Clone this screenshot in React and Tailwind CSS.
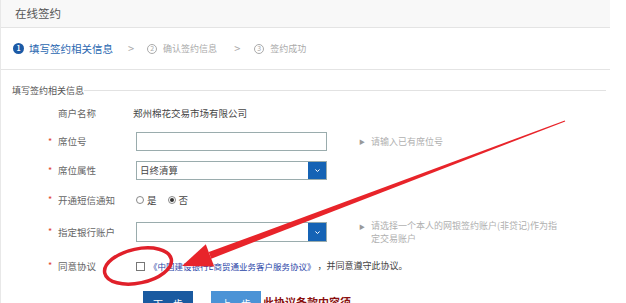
import React from "react";

const font = { fontFamily: '"Noto Sans CJK SC", "Noto Sans", sans-serif' };

function Label({ star, children }) {
  return (
    <div className="flex items-center w-[135px] pl-[47px] text-[9.5px] text-[#666]">
      <span className="w-[10px] text-[#e0452e] text-[9px]">{star ? "*" : ""}</span>
      <span>{children}</span>
    </div>
  );
}

function Chevron() {
  return (
    <svg width="7" height="5" viewBox="0 0 8 6">
      <path d="M1.5 1.8 L4 4.2 L6.5 1.8" fill="none" stroke="white" strokeWidth="1.2" />
    </svg>
  );
}

export default function App() {
  return (
    <div className="relative w-[626px] h-[303px] overflow-hidden bg-white" style={font}>
      <div className="w-[610px] border-l border-[#e8e8e8]">
        <div className="h-[28px] bg-[#f8f8f8] border-b border-[#e4e4e4] flex items-center pl-[14px] text-[11.5px] text-[#555]">
          在线签约
        </div>
        <div className="h-[42px] border-b border-[#e4e4e4] flex items-center pl-[12px] text-[9px] text-[#aaa]">
          <span className="w-[11px] h-[11px] rounded-full bg-[#1c5aa6] text-white text-[7px] flex items-center justify-center font-bold">1</span>
          <span className="ml-[5px] text-[10.5px] text-[#2a67b0]">填写签约相关信息</span>
          <span className="ml-[15px] text-[11px] text-[#aaa]">&gt;</span>
          <span className="ml-[13px] w-[10px] h-[10px] rounded-full border border-[#aaa] text-[7px] flex items-center justify-center">2</span>
          <span className="ml-[6px]">确认签约信息</span>
          <span className="ml-[17px] text-[11px] text-[#aaa]">&gt;</span>
          <span className="ml-[14px] w-[10px] h-[10px] rounded-full border border-[#aaa] text-[7px] flex items-center justify-center">3</span>
          <span className="ml-[6px]">签约成功</span>
        </div>
        <div className="h-[29px] flex items-end pb-[4px] pl-[11px] text-[9px] text-[#555]">
          <span className="leading-none">填写签约相关信息</span>
          <div className="flex-1 h-px bg-[#e2e2e2] mb-[4px] mr-[4px]"></div>
        </div>
        <div className="h-[28px] flex items-center">
          <Label>商户名称</Label>
          <span className="-ml-[3px] text-[9.5px] text-[#444]">郑州棉花交易市场有限公司</span>
        </div>
        <div className="h-[29px] flex items-center">
          <Label star>席位号</Label>
          <div className="w-[191px] h-[19px] border border-[#9aacad] bg-white"></div>
          <span className="ml-[32px] text-[6px] text-[#999]">▶</span>
          <span className="ml-[6px] text-[9px] text-[#b0b0b0]">请输入已有席位号</span>
        </div>
        <div className="h-[29px] flex items-center">
          <Label star>席位属性</Label>
          <div className="w-[191px] h-[19px] border border-[#9aacad] flex items-center">
            <span className="flex-1 pl-[3px] text-[9.5px] text-[#444]">日终清算</span>
            <span className="w-[18px] h-full bg-[#1563b5] flex items-center justify-center"><Chevron /></span>
          </div>
        </div>
        <div className="h-[30px] flex items-center">
          <Label star>开通短信通知</Label>
          <span className="w-[8px] h-[8px] rounded-full border border-[#888]"></span>
          <span className="ml-[3px] text-[9.5px] text-[#444]">是</span>
          <span className="ml-[11px] w-[8px] h-[8px] rounded-full border border-[#888] flex items-center justify-center">
            <span className="w-[4px] h-[4px] rounded-full bg-[#333]"></span>
          </span>
          <span className="ml-[3px] text-[9.5px] text-[#444]">否</span>
        </div>
        <div className="h-[34px] flex items-center">
          <Label star>指定银行账户</Label>
          <div className="w-[191px] h-[20px] border border-[#9aacad] flex items-center">
            <span className="flex-1"></span>
            <span className="w-[18px] h-full bg-[#1563b5] flex items-center justify-center"><Chevron /></span>
          </div>
          <span className="ml-[32px] self-start mt-[7px] text-[6px] text-[#999]">▶</span>
          <span className="ml-[6px] whitespace-nowrap text-[9px] leading-[13px] text-[#b0b0b0]">
            请选择一个本人的网银签约账户(非贷记)作为指
            <br />
            定交易账户
          </span>
        </div>
        <div className="h-[34px] flex items-center">
          <Label star>同意协议</Label>
          <span className="w-[9px] h-[9px] border border-[#777] bg-white"></span>
          <span className="ml-[4px] text-[8.5px] text-[#2b46a8]">《中国建设银行E商贸通业务客户服务协议》</span>
          <span className="ml-[2px] text-[9px] text-[#444]">，并同意遵守此协议。</span>
        </div>
        <div className="h-[40px] flex items-start pt-[8px] pl-[142px]">
          <span className="w-[50px] h-[24px] bg-[#1a5aa0] text-white text-[10px] flex items-center justify-center">下一步</span>
          <span className="ml-[18px] w-[50px] h-[24px] bg-[#4b93d6] text-white text-[10px] flex items-center justify-center">上一步</span>
          <span className="ml-[2px] mt-[3px] text-[11px] font-bold text-[#8a1010]">此协议条款内容须</span>
        </div>
      </div>
      <svg className="absolute inset-0 pointer-events-none" width="626" height="303" viewBox="0 0 626 303">
        <polygon points="211.2,258.7 565.2,121.4 564.8,120.6 208.8,252.1" fill="#e8242a" />
        <polygon points="182,266 214.2,266.6 205.8,244.2" fill="#e8242a" />
        <ellipse cx="138" cy="266" rx="34" ry="17" fill="none" stroke="#e0202a" strokeWidth="3.5" transform="rotate(-12 138 266)" />
      </svg>
    </div>
  );
}
